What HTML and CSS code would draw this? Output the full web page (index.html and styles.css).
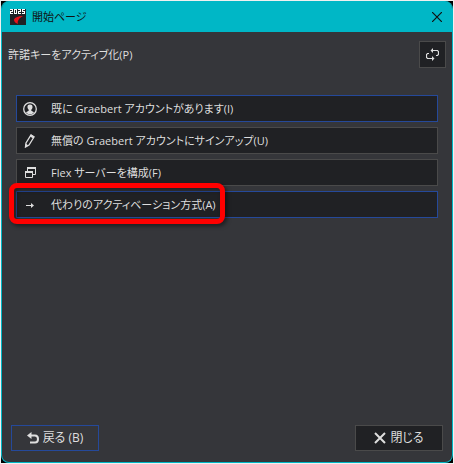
FILE: index.html
```html
<!DOCTYPE html>
<html lang="ja">
<head>
<meta charset="utf-8">
<title>開始ページ</title>
<link rel="stylesheet" href="styles.css">
</head>
<body>
<main class="window">
  <header class="titlebar">
    <svg class="app-icon" viewBox="0 0 16 16" aria-hidden="true">
      <rect width="16" height="16" fill="#202126"/>
      <path d="M0 .5h3M2.500 1v2M0 2.500h3M.5 3v2M0 4.500h3M4 .5h3M4.500 0v5M6.500 0v5M4 4.500h3M8 .5h3M10.500 0v3M8 2.500h3M8.500 3v2M8 4.500h3M12 .5h3M12.500 0v3M12 2.500h3M14.500 3v2M12 4.500h3" fill="none" stroke="#fff" stroke-width="1"/>
      <path d="M13 7C8 7 4 9 4 11c0 2 2 3 4 4-1-3 1-6 5-8z" fill="#e8121c"/>
    </svg>
    <h1 class="title">開始ページ</h1>
    <button class="close" type="button" aria-label="閉じる">
      <svg viewBox="0 0 10 10"><path d="M0 0l10 10M10 0L0 10" fill="none" stroke="#111" stroke-width="1.200"/></svg>
    </button>
  </header>
  <div class="toolbar">
    <p class="heading">許諾キーをアクティブ化(P)</p>
    <button class="refresh" type="button" aria-label="更新">
      <svg viewBox="0 0 13 13"><path d="M3 5.500H1.500l-1 1v3l1 1H7M6 2.500h5.500l1 1v3l-1 1H10" fill="none" stroke="#dedede" stroke-width="1.200"/><path d="M4.500 2.500L7 0v5zM8.500 10.500L6 8v5z" fill="#dedede"/></svg>
    </button>
  </div>
  <nav class="options">
    <button class="option active" type="button">
      <svg class="icon" viewBox="0 0 14 14"><circle cx="7" cy="7" r="6.300" fill="none" stroke="#dedede" stroke-width="1.300"/><path d="M7 2.500c-2 0-2.700 1.300-2.500 3 .1 1 .6 1.800 1.200 2.300v1L3 10.200C4 11.700 5.300 12.300 7 12.300s3-.6 4-2.100L8.300 8.800v-1c.6-.5 1.100-1.300 1.200-2.300.2-1.700-.5-3-2.500-3z" fill="#dedede"/></svg>
      <span>既に Graebert アカウントがあります(I)</span>
    </button>
    <button class="option" type="button">
      <svg class="icon" viewBox="0 0 14 14"><path d="M2.500 13l.5-4 5-8 3 2-5 8z" fill="none" stroke="#dedede" stroke-width="1.300"/><path d="M2 13.500L2.500 9.500l3 2zM7 2.500L8 .5l3.500 2-1.200 2z" fill="#dedede"/></svg>
      <span>無償の Graebert アカウントにサインアップ(U)</span>
    </button>
    <button class="option" type="button">
      <svg class="icon" viewBox="0 0 14 14"><path d="M4.500 5V1.500h8v7H10M2.500 5.500h7v6h-7z" fill="none" stroke="#dedede" stroke-width="1"/><path d="M4 1h9v2H4zM2 5h8v2H2z" fill="#dedede"/></svg>
      <span>Flex サーバーを構成(F)</span>
    </button>
    <button class="option active marked" type="button">
      <svg class="icon" viewBox="0 0 14 14"><path d="M3 7.500h6" fill="none" stroke="#dedede" stroke-width="1.200"/><path d="M8 5l3 2.500L8 10z" fill="#dedede"/></svg>
      <span>代わりのアクティベーション方式(A)</span>
    </button>
  </nav>
  <footer class="footer">
    <button class="action back" type="button">
      <svg class="small-icon" viewBox="0 0 12 12"><path d="M3 3.500h5c4 0 4 7 0 7H3" fill="none" stroke="#dedede" stroke-width="2"/><path d="M0 3.500L4.500 0v7z" fill="#dedede"/></svg>
      <span>戻る (B)</span>
    </button>
    <button class="action" type="button">
      <svg class="small-icon" viewBox="0 0 12 12"><path d="M1 1l10 10M11 1L1 11" fill="none" stroke="#dedede" stroke-width="2"/></svg>
      <span>閉じる</span>
    </button>
  </footer>
</main>
</body>
</html>
```
FILE: styles.css
```css
*,
*::after {
  box-sizing: border-box;
}

html {
  background: #f0f0f0;
}

body {
  margin: 0;
  padding: 1px;
  min-height: 100vh;
  display: flex;
  background: #000 content-box;
  color: #dedede;
  font: 11px/16px "Open Sans", "Noto Sans CJK JP", sans-serif;
  font-feature-settings: "palt";
}

button {
  margin: 0;
  padding: 0;
  color: inherit;
  font: inherit;
  font-feature-settings: inherit;
  background: #202124;
  border: 1px solid #4a4a4a;
}

svg {
  display: block;
  flex: none;
}

.window {
  flex: 1;
  display: flex;
  flex-direction: column;
  overflow: hidden;
  background: #35363a;
  border: 1px solid #00b7c6;
  border-top: 0;
  border-radius: 8px;
}

.titlebar {
  display: flex;
  align-items: center;
  gap: 6px;
  height: 31px;
  padding: 0 10px 0 8px;
  background: #00b7c6;
  color: #111;
}

.app-icon {
  width: 16px;
  height: 16px;
}

.title {
  flex: 1;
  margin: 0;
  font-size: 11px;
  font-weight: 400;
}

.close {
  background: none;
  border: 0;
}

.close svg {
  width: 10px;
  height: 10px;
}

.toolbar {
  display: flex;
  align-items: center;
  justify-content: space-between;
  padding: 9px 6px 0;
}

.heading {
  margin: 0;
}

.refresh {
  display: grid;
  place-items: center;
  width: 27px;
  height: 27px;
}

.refresh svg {
  width: 13px;
  height: 13px;
}

.options {
  display: grid;
  gap: 5px;
  padding: 27px 14px 0;
}

.option {
  display: flex;
  align-items: center;
  gap: 14px;
  height: 27px;
  padding: 0 6px;
  text-align: left;
  white-space: nowrap;
}

.option.active,
.action.back {
  border-color: #25499a;
}

.icon {
  width: 14px;
  height: 14px;
}

.marked {
  position: relative;
}

/* Highlight frame over the start of the button */
.marked::after {
  content: "";
  position: absolute;
  top: -9px;
  left: -8px;
  width: 216px;
  height: 41px;
  border: 5px solid #f00;
  border-radius: 8px;
  filter: drop-shadow(2px 2px 2px rgba(0, 0, 0, 0.5));
}

.footer {
  display: flex;
  justify-content: space-between;
  margin-top: auto;
  padding: 0 9px 11px;
}

.action {
  display: flex;
  align-items: center;
  justify-content: center;
  gap: 4px;
  width: 88px;
  height: 26px;
  font-size: 12px;
}

.action.back {
  background: #35363a;
}

.small-icon {
  width: 12px;
  height: 12px;
}
```
